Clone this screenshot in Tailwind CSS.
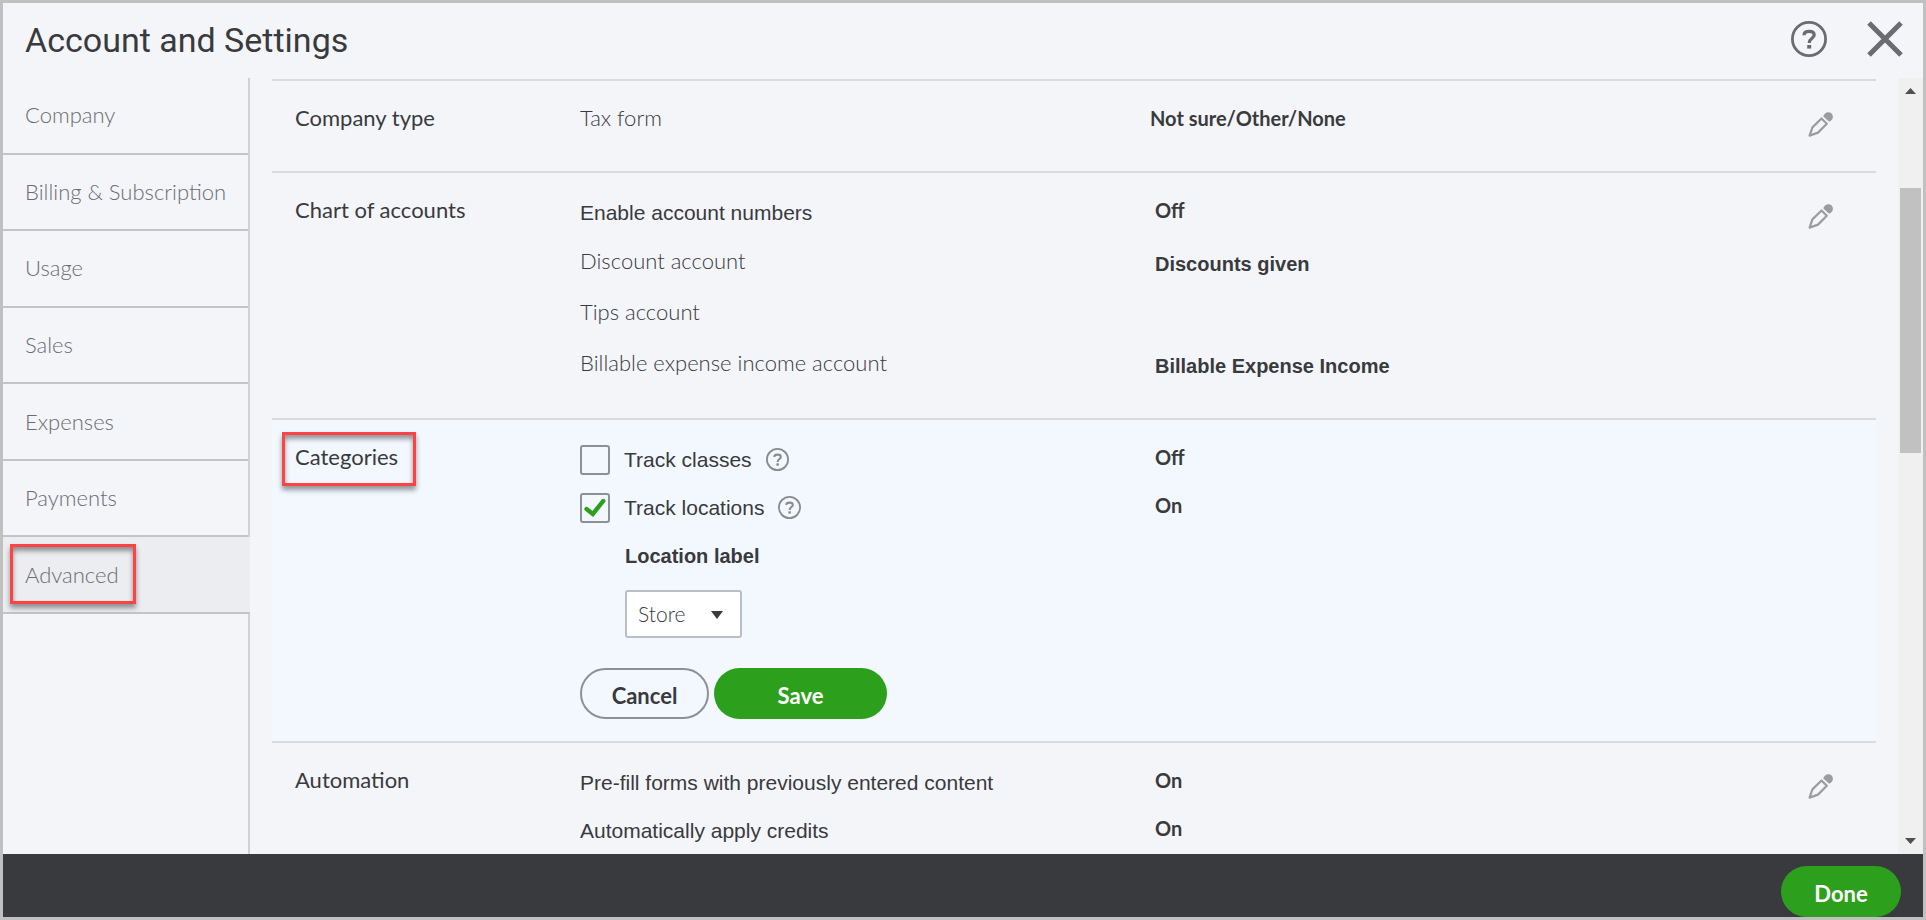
<!DOCTYPE html>
<html lang="en">
<head>
    <meta charset="UTF-8">
    <meta name="viewport" content="width=device-width, initial-scale=1.0">
    <title>Account and Settings</title>
    <script src="https://cdn.jsdelivr.net/npm/@tailwindcss/browser@4"></script>
</head>
<body class="h-screen overflow-hidden flex flex-col border-3 border-[#c0c0c0] bg-[#f4f5f9] font-['Lato',sans-serif] text-[22px] leading-[30px] text-[#393a3d]">
    <!-- Shared icons -->
    <svg class="hidden">
        <symbol id="pencil" viewBox="0 0 25 25">
            <path d="M13.5 6.5 L18.8 11.8 L10 20.6 L1.6 23.6 L4.4 15.4 Z" fill="none" stroke="#9c9c9c" stroke-width="2.2" stroke-linejoin="round"/>
            <path d="M15.3 4.6 C15.8 1.8 18 0.2 20.4 0.2 C23 0.2 24.9 2.2 24.9 4.8 C24.9 6.8 23.6 8.8 21.2 9.8 Z" fill="#9c9c9c"/>
        </symbol>
        <symbol id="help" viewBox="0 0 36 36">
            <circle cx="18" cy="18" r="16.6" fill="none" stroke="currentColor" stroke-width="2.8"/>
            <path d="M13 14.2 C13 11.4 15.2 10.4 18.2 10.4 C21.4 10.4 23.2 11.8 23.2 14.1 C23.2 17.4 18.2 17.4 18.2 22" fill="none" stroke="currentColor" stroke-width="3.2"/>
            <path d="M16.2 24 h4 v3.6 h-4 z" fill="currentColor"/>
        </symbol>
    </svg>

    <!-- Header -->
    <header class="h-[75px] shrink-0 flex items-center pb-[3px] pl-[22px] pr-5">
        <h1 class="flex-1 pt-0.5 font-['Roboto',sans-serif] text-[34px] leading-[40px]">Account and Settings</h1>
        <div class="flex items-center gap-10 text-[#6b6c72]">
            <button type="button" aria-label="Help"><svg class="size-9"><use href="#help"/></svg></button>
            <button type="button" aria-label="Close">
                <svg class="size-9" viewBox="0 0 36 36" fill="none" stroke="currentColor" stroke-width="5"><path d="M2 2 L34 34 M34 2 L2 34"/></svg>
            </button>
        </div>
    </header>

    <div class="flex-1 min-h-0 flex">
        <!-- Sidebar -->
        <nav class="w-[247px] shrink-0 border-r-2 border-[#d0d1d4] text-[#6b6c72] font-light">
            <ul class="h-[536px] -mr-0.5 grid auto-rows-fr">
                <li class="mr-0.5 border-b-2 border-[#c3c4c6]"><a href="#" class="h-full flex items-center pl-[22px]">Company</a></li>
                <li class="mr-0.5 border-b-2 border-[#c3c4c6]"><a href="#" class="h-full flex items-center pl-[22px]">Billing &amp; Subscription</a></li>
                <li class="mr-0.5 border-b-2 border-[#c3c4c6]"><a href="#" class="h-full flex items-center pl-[22px]">Usage</a></li>
                <li class="mr-0.5 border-b-2 border-[#c3c4c6]"><a href="#" class="h-full flex items-center pl-[22px]">Sales</a></li>
                <li class="mr-0.5 border-b-2 border-[#c3c4c6]"><a href="#" class="h-full flex items-center pl-[22px]">Expenses</a></li>
                <li class="mr-0.5 border-b-2 border-[#c3c4c6]"><a href="#" class="h-full flex items-center pl-[22px]">Payments</a></li>
                <li class="relative border-b-2 border-[#c3c4c6] bg-[#ecedf1]">
                    <a href="#" aria-current="page" class="h-full flex items-center pl-[22px]">Advanced</a>
                    <span class="absolute left-[7px] top-[7px] w-[126px] h-[60px] border-3 border-[#ff4242] shadow-[0_4px_5px_rgba(0,0,0,0.4),inset_0_4px_5px_rgba(0,0,0,0.4)]"></span>
                </li>
            </ul>
        </nav>

        <!-- Settings -->
        <main class="flex-1 overflow-hidden pt-px px-[22px]">
            <section class="h-[92px] border-t-2 border-[#dadbdc] pt-[22px] pl-[23px] pr-[43px] grid grid-cols-[285px_1fr_25px]">
                <h2>Company type</h2>
                <div class="grid grid-cols-[570fr_658fr] content-start">
                    <span class="font-light">Tax form</span>
                    <span class="font-bold text-[20px]">Not sure/Other/None</span>
                </div>
                <button type="button" aria-label="Edit company type" class="self-start pt-[9px]"><svg class="size-[25px]"><use href="#pencil"/></svg></button>
            </section>

            <section class="h-[247px] border-t-2 border-[#dadbdc] pt-[22px] pl-[23px] pr-[43px] grid grid-cols-[285px_1fr_25px]">
                <h2>Chart of accounts</h2>
                <div class="grid grid-cols-[575fr_653fr] auto-rows-[51px] content-start">
                    <span class="pt-[3px] font-['Liberation_Sans',sans-serif] text-[21px]">Enable account numbers</span>
                    <span class="font-bold text-[20px]">Off</span>
                    <span class="font-light">Discount account</span>
                    <span class="pt-[3px] font-['Liberation_Sans',sans-serif] font-bold text-[20px]">Discounts given</span>
                    <span class="font-light">Tips account</span>
                    <span></span>
                    <span class="font-light">Billable expense income account</span>
                    <span class="pt-[3px] font-['Liberation_Sans',sans-serif] font-bold text-[20px]">Billable Expense Income</span>
                </div>
                <button type="button" aria-label="Edit chart of accounts" class="self-start pt-[9px]"><svg class="size-[25px]"><use href="#pencil"/></svg></button>
            </section>

            <form class="relative border-t-2 border-[#dadbdc] bg-[#f3f8ff] pt-[22px] pb-[22px] pl-[23px] pr-[43px] grid grid-cols-[285px_1fr_25px]">
                <h2>Categories</h2>
                <span class="absolute left-[10px] top-3 w-[134px] h-[54px] border-3 border-[#ff4242] shadow-[0_4px_5px_rgba(0,0,0,0.4),inset_0_4px_5px_rgba(0,0,0,0.4)]"></span>
                <div>
                    <div class="grid grid-cols-[575fr_653fr] auto-rows-[48px]">
                        <div class="pt-[3px] flex items-start font-['Liberation_Sans',sans-serif] text-[21px]">
                            <input type="checkbox" id="trackClasses" class="appearance-none size-[30px] rounded-[3px] border-2 border-[#8d9096]">
                            <label for="trackClasses" class="pl-3.5">Track classes</label>
                            <button type="button" aria-label="About classes" class="ml-3.5 mt-[3px] text-[#8b8b8b]"><svg class="size-[23px]"><use href="#help"/></svg></button>
                        </div>
                        <span class="font-bold text-[20px]">Off</span>
                        <div class="pt-[3px] flex items-start font-['Liberation_Sans',sans-serif] text-[21px]">
                            <span class="relative size-[30px]">
                                <input type="checkbox" id="trackLocations" checked class="block appearance-none size-[30px] rounded-[3px] border-2 border-[#8d9096]">
                                <svg class="absolute inset-0 size-[30px] pointer-events-none" viewBox="0 0 30 30"><path d="M6.5 16 L12.8 21 L23.2 8" fill="none" stroke="#2ca01c" stroke-width="4.4" stroke-linecap="round" stroke-linejoin="miter"/></svg>
                            </span>
                            <label for="trackLocations" class="pl-3.5">Track locations</label>
                            <button type="button" aria-label="About locations" class="ml-3.5 mt-[3px] text-[#8b8b8b]"><svg class="size-[23px]"><use href="#help"/></svg></button>
                        </div>
                        <span class="font-bold text-[20px]">On</span>
                        <label for="locationLabel" class="pt-[3px] pl-[45px] font-['Liberation_Sans',sans-serif] font-bold text-[20px]">Location label</label>
                    </div>
                    <div class="relative w-[117px] ml-[45px] mt-1">
                        <select id="locationLabel" class="block appearance-none w-full h-12 pl-[11px] rounded-[3px] border-2 border-[#babec5] bg-white font-light text-[21px]">
                            <option>Store</option>
                            <option>Location</option>
                            <option>Department</option>
                        </select>
                        <svg class="absolute right-[19px] top-[21px] w-3 h-2 pointer-events-none" viewBox="0 0 12 8"><path d="M0 0 H12 L6 8 Z" fill="#393a3d"/></svg>
                    </div>
                    <div class="mt-[30px] flex gap-[5px]">
                        <button type="button" class="w-[129px] h-[51px] pt-1 rounded-full border-2 border-[#8d9096] font-bold">Cancel</button>
                        <button type="submit" class="w-[173px] h-[51px] pt-1 rounded-full bg-[#2ca01c] text-white font-bold">Save</button>
                    </div>
                </div>
            </form>

            <section class="border-t-2 border-[#dadbdc] pt-[22px] pl-[23px] pr-[43px] grid grid-cols-[285px_1fr_25px]">
                <h2>Automation</h2>
                <div class="grid grid-cols-[575fr_653fr] auto-rows-[48px] content-start">
                    <span class="pt-[3px] font-['Liberation_Sans',sans-serif] text-[21px]">Pre-fill forms with previously entered content</span>
                    <span class="font-bold text-[20px]">On</span>
                    <span class="pt-[3px] font-['Liberation_Sans',sans-serif] text-[21px]">Automatically apply credits</span>
                    <span class="font-bold text-[20px]">On</span>
                </div>
                <button type="button" aria-label="Edit automation" class="self-start pt-[9px]"><svg class="size-[25px]"><use href="#pencil"/></svg></button>
            </section>
        </main>

        <!-- Scrollbar -->
        <div class="w-[25px] shrink-0 bg-[#f0f0f0] flex flex-col items-center py-2.5">
            <svg class="w-[11px] h-1.5 shrink-0" viewBox="0 0 11 6"><path d="M0 6 H11 L5.5 0 Z" fill="#505050"/></svg>
            <div class="flex-1 w-[21px] pt-[94px]"><div class="h-[265px] bg-[#c1c1c1]"></div></div>
            <svg class="w-[11px] h-1.5 shrink-0" viewBox="0 0 11 6"><path d="M0 0 H11 L5.5 6 Z" fill="#505050"/></svg>
        </div>
    </div>

    <!-- Footer -->
    <footer class="h-[63px] shrink-0 bg-[#393a3d] flex items-end justify-end pr-[22px]">
        <button type="button" class="w-[120px] h-[51px] pt-1 rounded-full bg-[#2ca01c] text-white font-bold">Done</button>
    </footer>
</body>
</html>
